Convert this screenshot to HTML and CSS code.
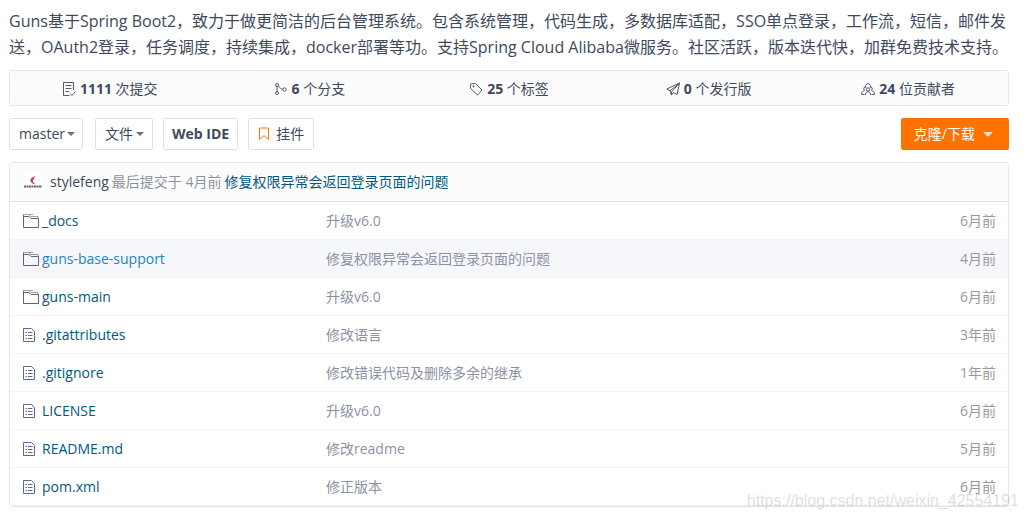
FILE: index.html
```html
<!DOCTYPE html>
<html lang="zh-CN">
<head>
<meta charset="utf-8">
<meta name="viewport" content="width=device-width, initial-scale=1">
<title>Guns</title>
<link rel="stylesheet" href="styles.css">
</head>
<body>
<svg class="sprite" aria-hidden="true">
  <symbol id="folder" viewBox="0 0 16 16">
    <path d="M.5 1.500V14.500H15.500V5.500H8L6 3.500H.5"/>
    <path class="thin" d="M.5 1.500H5.500L7.500 3.500H15V5.500M6 1.500H10"/>
  </symbol>
  <symbol id="file" viewBox="0 0 12 14">
    <path d="M.5.5H8.500L11.500 3.500V13.500H.5Z"/>
    <path d="M5 4.500H9.500M5 7.500H9.500M5 10.500H9.500M2.500 4.500H4M2.500 7.500H4M2.500 10.500H4"/>
  </symbol>
</svg>
<main class="page">
  <p class="summary">Guns基于Spring Boot2，致力于做更简洁的后台管理系统。包含系统管理，代码生成，多数据库适配，SSO单点登录，工作流，短信，邮件发送，OAuth2登录，任务调度，持续集成，docker部署等功。支持Spring Cloud Alibaba微服务。社区活跃，版本迭代快，加群免费技术支持。</p>

  <nav class="stats">
    <a href="#"><svg class="icon" viewBox="0 0 14 14"><path d="M11.500 8V.5H1.500V13.500H7.500M3.500 3.500H9.500M3.500 6.500H9.500M3.500 9.500H7M8 11.500 10 13.500 13.500 9.500"/></svg><span><b>1111</b> 次提交</span></a>
    <a href="#"><svg class="icon" viewBox="0 0 14 14"><circle cx="3" cy="3" r="1.500"/><circle cx="3" cy="11" r="1.500"/><circle cx="10.500" cy="7.500" r="1.700"/><path d="M3 4.500V9.500M4.300 4C6 4.500 5.500 7 8.800 7.300"/></svg><span><b>6</b> 个分支</span></a>
    <a href="#"><svg class="icon" viewBox="0 0 14 14"><path d="M1.500 2 6.500 1.500 13 8 8.500 13 1.500 6.500Z"/><circle cx="4.500" cy="4.500" r=".6"/></svg><span><b>25</b> 个标签</span></a>
    <a href="#"><svg class="icon" viewBox="0 0 14 14"><path d="M13.500 1 .8 7 4 8.800 5.500 13 7.500 10.500 11 12.500ZM4 8.800 13.500 1 5.500 10V13"/></svg><span><b>0</b> 个发行版</span></a>
    <a href="#"><svg class="icon" viewBox="0 0 14 14"><path d="M5 6C4 5 4.500 1.500 7 1.500S10 5 9 6M4.500 4.500C2.500 5 2.500 7.500 3.500 8.500 1.500 9 .5 10.500.5 12.500H3.500M9.500 4.500C11.500 5 11.500 7.500 10.500 8.500 12.500 9 13.500 10.500 13.500 12.500H10.500"/><circle cx="7" cy="7.500" r="1.700"/><path d="M4.500 13C4.500 8.500 9.500 8.500 9.500 13"/></svg><span><b>24</b> 位贡献者</span></a>
  </nav>

  <div class="toolbar">
    <button class="btn branch" type="button">master<i class="caret"></i></button>
    <button class="btn menu" type="button">文件<i class="caret"></i></button>
    <button class="btn strong" type="button">Web IDE</button>
    <button class="btn widget" type="button"><svg class="bookmark" viewBox="0 0 12 14"><path d="M1.500 1H10.500V12.500L6 8.500 1.500 12.500Z"/></svg>挂件</button>
    <button class="btn primary" type="button">克隆/下载<i class="caret"></i></button>
  </div>

  <section class="files">
    <header class="commit">
      <svg class="avatar" viewBox="0 0 20 20"><circle class="disc" cx="10" cy="10" r="10"/><path class="flame" d="M12.500 4C9 5 7 7 7.500 9 8 11 10 12 12.500 12.300 10.500 11 9.500 9.500 10 8L12 7.300 10.300 7.200Z"/><path class="mark" d="M1 14.500H19"/></svg>
      <a class="author" href="#">stylefeng</a>
      <span>最后提交于 4月前</span>
      <a class="message" href="#">修复权限异常会返回登录页面的问题</a>
    </header>
    <table>
      <tbody>
        <tr><td class="name"><a href="#"><svg class="folder"><use href="#folder"/></svg>_docs</a></td><td>升级v6.0</td><td class="age">6月前</td></tr>
        <tr class="active"><td class="name"><a href="#"><svg class="folder"><use href="#folder"/></svg>guns-base-support</a></td><td>修复权限异常会返回登录页面的问题</td><td class="age">4月前</td></tr>
        <tr><td class="name"><a href="#"><svg class="folder"><use href="#folder"/></svg>guns-main</a></td><td>升级v6.0</td><td class="age">6月前</td></tr>
        <tr><td class="name"><a href="#"><svg class="file"><use href="#file"/></svg>.gitattributes</a></td><td>修改语言</td><td class="age">3年前</td></tr>
        <tr><td class="name"><a href="#"><svg class="file"><use href="#file"/></svg>.gitignore</a></td><td>修改错误代码及删除多余的继承</td><td class="age">1年前</td></tr>
        <tr><td class="name"><a href="#"><svg class="file"><use href="#file"/></svg>LICENSE</a></td><td>升级v6.0</td><td class="age">6月前</td></tr>
        <tr><td class="name"><a href="#"><svg class="file"><use href="#file"/></svg>README.md</a></td><td>修改readme</td><td class="age">5月前</td></tr>
        <tr><td class="name"><a href="#"><svg class="file"><use href="#file"/></svg>pom.xml</a></td><td>修正版本</td><td class="age">6月前</td></tr>
      </tbody>
    </table>
  </section>
  <div class="watermark">https://blog.csdn.net/weixin_42554191</div>
</main>
</body>
</html>
```
FILE: styles.css
```css
* { box-sizing: border-box; }

body {
  margin: 0;
  background: #fff;
  color: #40485b;
  font: 14px/20px "Open Sans", "Noto Sans CJK SC", sans-serif;
}

a { color: inherit; text-decoration: none; }
svg { fill: none; stroke: currentColor; flex: none; }
.sprite { position: absolute; width: 0; height: 0; }

.page { position: relative; padding: 8px 17px 12px 9px; }

.summary { margin: 0 0 10px; font-size: 16px; line-height: 26px; }

.stats {
  display: grid;
  grid-template-columns: repeat(5, 1fr);
  height: 36px;
  border: 1px solid #e3e9ed;
  border-radius: 3px;
  background: #fcfcfc;
}
.stats a { display: flex; align-items: center; justify-content: center; gap: 4px; padding-top: 2px; }
.icon { width: 14px; height: 14px; stroke-width: 0.9; }

.toolbar { display: flex; margin: 12px 0; }
.btn {
  display: flex;
  align-items: center;
  height: 32px;
  margin-right: 10px;
  padding: 0 9px;
  border: 1px solid #dce3e8;
  border-radius: 2px;
  background: #fff;
  color: inherit;
  font: inherit;
  white-space: nowrap;
}
.branch { margin-right: 12px; padding: 0 7px 0 9px; }
.menu { padding: 0 8px 0 9px; }
.strong { font-weight: 700; }
.caret {
  margin-left: 3px;
  border: 4px solid transparent;
  border-top-color: #6b7080;
  border-bottom: 0;
}
.branch .caret { margin-left: 2px; }
.widget { padding: 0 9px; gap: 6px; }
.strong { padding: 0 8px; }
.bookmark { width: 12px; height: 14px; color: #fe7300; }
.primary {
  margin: 0 0 0 auto;
  padding: 0 15px 0 12px;
  border-color: #fe7300;
  background: #fe7300;
  color: #fff;
}
.primary .caret {
  margin-left: 8px;
  border-width: 5px 5px 0;
  border-top-color: #ffdcbf;
}

.files {
  overflow: hidden;
  border: 1px solid #e3e9ed;
  border-bottom-color: #dce3e8;
  border-radius: 4px;
}
.commit {
  display: flex;
  align-items: center;
  gap: 3px;
  height: 39px;
  padding: 0 13px;
  border-bottom: 1px solid #dce3e8;
  background: #fcfcfc;
  color: #8c92a4;
}
.avatar { width: 20px; height: 20px; margin-right: 4px; stroke: none; }
.disc { fill: #fff; }
.flame { fill: #d93a3a; }
.mark { stroke: #666; stroke-width: 2; stroke-dasharray: 2 0.5; }
.author { color: #40485b; }
.message { color: #005980; }

table { width: 100%; border-spacing: 0; table-layout: fixed; }
td {
  height: 38px;
  padding: 0 12px 0 0;
  border-bottom: 1px solid #f0f2f3;
  color: #8c92a4;
}
.name { width: 316px; padding-left: 13px; color: #005980; }
.name a { display: flex; align-items: center; }
.age { width: 120px; text-align: right; color: #999; }
.active td { background: #f6f7fb; }
.active .name a { color: #2185c5; }
.folder { width: 16px; height: 16px; margin-right: 3px; color: #5f6477; }
.active .folder { color: #5f6477; }
.file { width: 12px; height: 14px; margin-right: 7px; color: #5c6b8c; }
.thin { opacity: 0.6; }

.watermark {
  position: absolute;
  right: 7px;
  bottom: 8px;
  color: rgba(120, 120, 120, 0.25);
  font: 16px/20px "Liberation Sans", Arial, sans-serif;
  pointer-events: none;
}
```
